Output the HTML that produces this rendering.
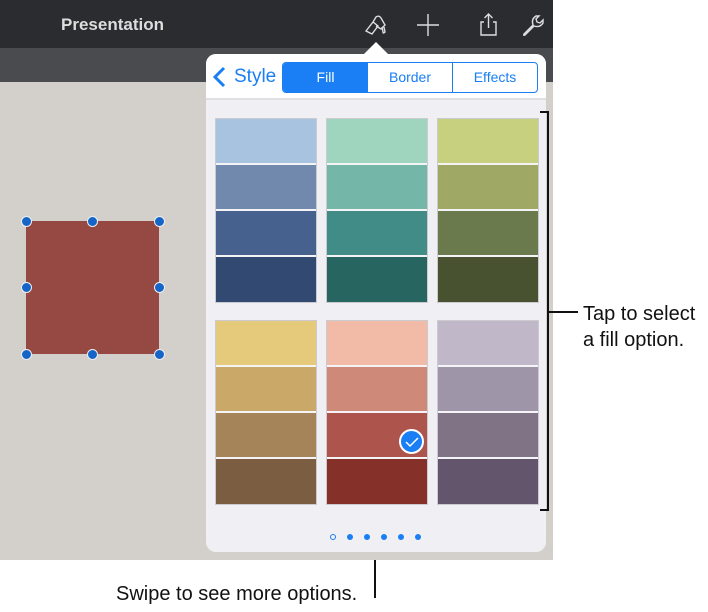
<!DOCTYPE html>
<html><head><meta charset="utf-8"><style>
*{margin:0;padding:0;box-sizing:border-box}
body{width:708px;height:612px;background:#fff;position:relative;overflow:hidden;font-family:"Liberation Sans",sans-serif}
.abs{position:absolute}
.sw{position:absolute;width:102px;border:1px solid rgba(0,0,0,.15)}
.sw div{height:46px;border-bottom:2px solid #f4f4f6}
.sw div:last-child{border-bottom:none;height:45px}
.h{position:absolute;width:11px;height:11px;border-radius:50%;background:#1565c8;border:1.5px solid #eee;margin:-5.5px 0 0 -5.5px}
.dot{position:absolute;width:6px;height:6px;border-radius:50%;background:#1a7ef5;top:534px}
</style></head><body>
<div class="abs" style="left:0;top:0;width:553px;height:48px;background:#2b2c2f"></div>
<div class="abs" style="left:0;top:48px;width:553px;height:34px;background:#4a4b4f"></div>
<div class="abs" style="left:0;top:82px;width:553px;height:478px;background:#d3d0cb"></div>
<div class="abs" style="left:61px;top:15px;color:#ddd;font-size:17px;font-weight:bold">Presentation</div>
<svg class="abs" style="left:360px;top:10px" width="190" height="30" fill="none" stroke="#ddd" stroke-width="1.4">
<path d="M6 21 l7-9 l5 4 l-6 8 z M13 12 l3-5 q3-2 5 1 l4 7 l-4 4 l-5-3 M22 17 l1 5 q0 2 2 0 l-1-5"/>
<path d="M68 4 v22 M57 15 h22"/>
<path d="M124 12 h-3 v13 h15 v-13 h-3 M128.5 4 v14 M124.5 8 l4-4 l4 4"/>
<path d="M164 24 l9-9 q-2-6 3-9 l3 0 -3 3 1 3 3 1 3-3 0 3 q-3 5-9 3 l-9 9 q-2 1-1-1 z"/>
</svg>
<svg class="abs" style="left:362px;top:41px" width="28" height="15"><path d="M0 15 L14 1 L28 15 Z" fill="#fff"/></svg>
<div class="abs" style="left:206px;top:54px;width:340px;height:498px;background:#efeff4;border-radius:10px;overflow:hidden">
<div style="height:46px;background:#fff;border-bottom:2px solid #e0e0e4"></div>
</div>
<svg class="abs" style="left:212px;top:66px" width="16" height="22"><path d="M12 2 L3 11 L12 20" fill="none" stroke="#1a7ef5" stroke-width="3"/></svg>
<div class="abs" style="left:234px;top:66px;color:#1a7ef5;font-size:19px">Style</div>
<div class="abs" style="left:282px;top:62px;width:256px;height:31px;border:1px solid #1a7ef5;border-radius:4px;display:flex;font-size:14px;color:#1a7ef5;overflow:hidden">
<div style="width:85px;background:#1a7ef5;color:#fff;text-align:center;line-height:29px">Fill</div>
<div style="width:85px;border-right:1px solid #1a7ef5;text-align:center;line-height:29px">Border</div>
<div style="flex:1;text-align:center;line-height:29px">Effects</div>
</div>
<div class="sw" style="left:215px;top:118px"><div style="background:#a8c3e0"></div><div style="background:#7089ad"></div><div style="background:#47618f"></div><div style="background:#324972"></div></div>
<div class="sw" style="left:326px;top:118px"><div style="background:#9fd4bf"></div><div style="background:#74b6a8"></div><div style="background:#428c87"></div><div style="background:#276561"></div></div>
<div class="sw" style="left:437px;top:118px"><div style="background:#c6d07e"></div><div style="background:#9fa865"></div><div style="background:#6b7a4d"></div><div style="background:#485230"></div></div>
<div class="sw" style="left:215px;top:320px"><div style="background:#e6ca7c"></div><div style="background:#caa868"></div><div style="background:#a48458"></div><div style="background:#7b5d42"></div></div>
<div class="sw" style="left:326px;top:320px"><div style="background:#f2bba7"></div><div style="background:#cf8979"></div><div style="background:#ad554d"></div><div style="background:#86302a"></div></div>
<div class="sw" style="left:437px;top:320px"><div style="background:#c0b7c8"></div><div style="background:#9f95a8"></div><div style="background:#817386"></div><div style="background:#62556c"></div></div>
<div class="abs" style="left:399px;top:429px;width:25px;height:25px;border-radius:50%;background:#1a7ef5;border:2px solid #fff"></div>
<svg class="abs" style="left:399px;top:429px" width="25" height="25"><path d="M7 13 l4 4 l8-8" fill="none" stroke="#fff" stroke-width="1.5"/></svg>
<div class="dot" style="left:330px;background:none;border:1px solid #1a7ef5"></div>
<div class="dot" style="left:347px"></div><div class="dot" style="left:364px"></div><div class="dot" style="left:381px"></div><div class="dot" style="left:398px"></div><div class="dot" style="left:415px"></div>
<div class="abs" style="left:26px;top:221px;width:133px;height:133px;background:#964942"></div>
<div class="h" style="left:26px;top:221px"></div><div class="h" style="left:92px;top:221px"></div><div class="h" style="left:159px;top:221px"></div>
<div class="h" style="left:26px;top:287px"></div><div class="h" style="left:159px;top:287px"></div>
<div class="h" style="left:26px;top:354px"></div><div class="h" style="left:92px;top:354px"></div><div class="h" style="left:159px;top:354px"></div>
<div class="abs" style="left:540px;top:111px;width:9px;height:400px;border:2px solid #111;border-left:none"></div>
<div class="abs" style="left:548px;top:311px;width:30px;height:2px;background:#111"></div>
<div class="abs" style="left:583px;top:301px;font-size:20px;line-height:26px;color:#111">Tap to select<br>a fill option.</div>
<div class="abs" style="left:374px;top:560px;width:2px;height:38px;background:#111"></div>
<div class="abs" style="left:116px;top:583px;font-size:20px;color:#111">Swipe to see more options.</div>
</body></html>
